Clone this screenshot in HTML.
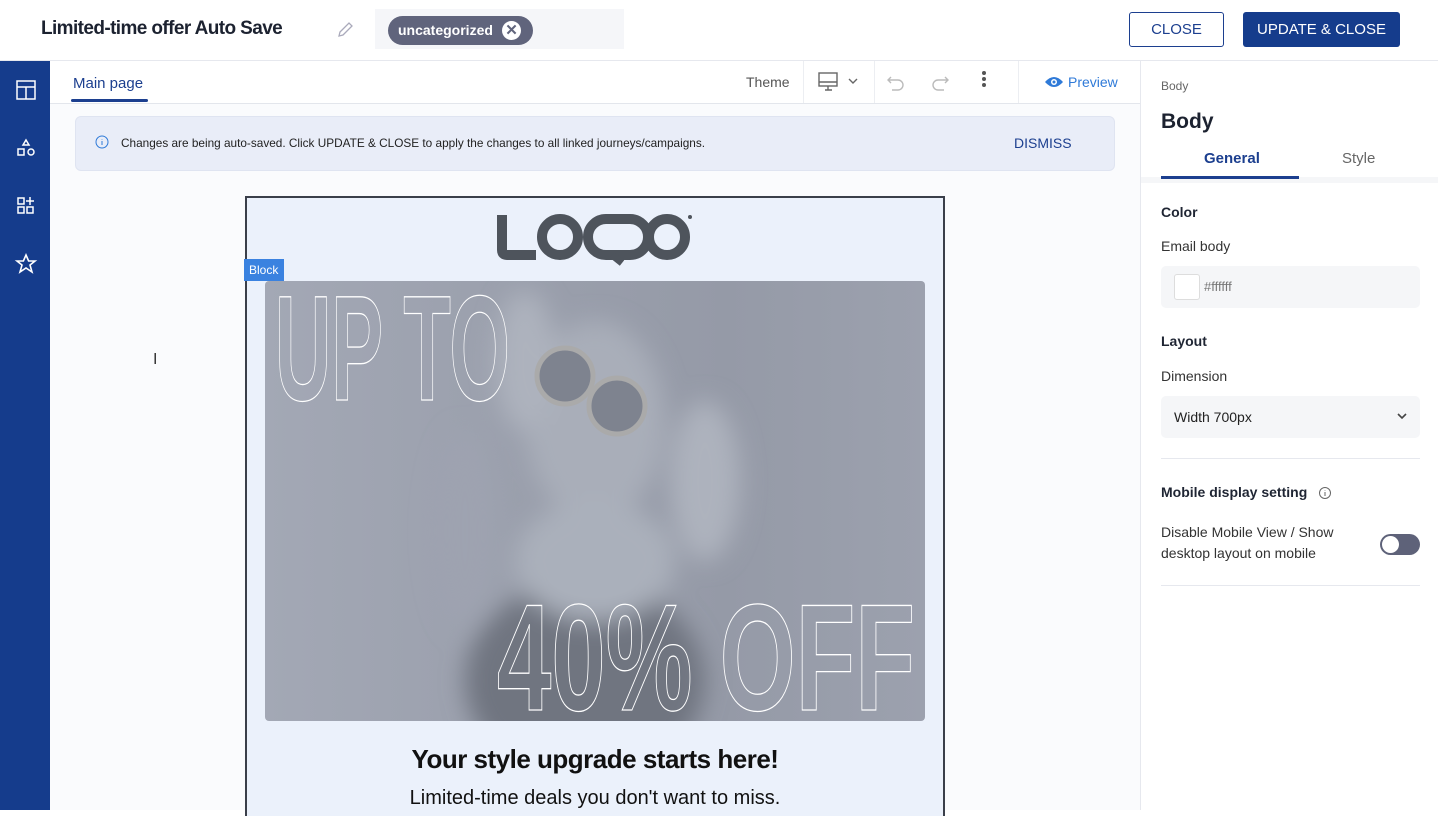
<!DOCTYPE html>
<html><head><meta charset="utf-8">
<style>
*{box-sizing:border-box;margin:0;padding:0}
body{width:1438px;height:810px;overflow:hidden;background:#fff;font-family:"Liberation Sans",sans-serif;position:relative;color:#1f2533}
.abs{position:absolute}
.btn{display:flex;align-items:center;justify-content:center}
</style></head><body>
<!-- header -->
<div class="abs" style="left:0;top:0;width:1438px;height:61px;border-bottom:1px solid #e6e8ee;background:#fff"></div>
<div class="abs" style="left:41px;top:18px;font-size:19px;font-weight:bold;letter-spacing:-0.6px;color:#1c2230">Limited-time offer Auto Save</div>
<svg class="abs" style="left:335px;top:20px" width="20" height="20" viewBox="0 0 20 20"><path d="M4 16 L5 12 L14 3 L17 6 L8 15 Z" fill="none" stroke="#aab" stroke-width="1.3"/></svg>
<div class="abs" style="left:375px;top:9px;width:249px;height:40px;background:#f5f6f9"></div>
<div class="abs" style="left:388px;top:16px;width:145px;height:29px;border-radius:15px;background:#60647c;color:#fff;font-size:14px;font-weight:bold;padding:6px 0 0 10px">uncategorized</div>
<div class="abs" style="left:502px;top:21px;width:19px;height:19px;border-radius:50%;background:#fff;color:#60647c;font-size:15px;font-weight:bold;text-align:center;line-height:19px">✕</div>
<div class="abs btn" style="left:1129px;top:12px;width:95px;height:35px;border:1.5px solid #1c3f8f;border-radius:3px;color:#1c3f8f;font-size:15px">CLOSE</div>
<div class="abs btn" style="left:1243px;top:12px;width:157px;height:35px;background:#153c8c;border-radius:3px;color:#fff;font-size:15px">UPDATE &amp; CLOSE</div>
<!-- sidebar -->
<div class="abs" style="left:0;top:61px;width:50px;height:749px;background:#153c8c"></div>
<svg class="abs" style="left:15px;top:79px" width="22" height="22" viewBox="0 0 22 22" fill="none" stroke="#fff" stroke-width="1.5"><rect x="2" y="2" width="18" height="18"/><path d="M2 8H20M11 8V20"/></svg>
<svg class="abs" style="left:15px;top:137px" width="22" height="22" viewBox="0 0 22 22" fill="none" stroke="#fff" stroke-width="1.5"><path d="M11 3L14 8H8Z"/><rect x="3" y="12" width="6" height="6"/><circle cx="16" cy="15" r="3"/></svg>
<svg class="abs" style="left:15px;top:195px" width="22" height="22" viewBox="0 0 22 22" fill="none" stroke="#fff" stroke-width="1.5"><rect x="3" y="3" width="6" height="6"/><rect x="3" y="12" width="6" height="6"/><rect x="12" y="12" width="6" height="6"/><path d="M15 2V10M11 6H19"/></svg>
<svg class="abs" style="left:14px;top:252px" width="24" height="24" viewBox="0 0 24 24" fill="none" stroke="#fff" stroke-width="1.6"><path d="M12 3L14.6 9H21L16 13L18 20L12 16L6 20L8 13L3 9H9.4Z"/></svg>
<!-- toolbar -->
<div class="abs" style="left:50px;top:61px;width:1090px;height:43px;border-bottom:1px solid #e3e6ec;background:#fff"></div>
<div class="abs" style="left:73px;top:75px;font-size:15px;color:#1c3f8f">Main page</div>
<div class="abs" style="left:71px;top:99px;width:77px;height:3px;background:#1c3f8f;border-radius:2px"></div>
<div class="abs" style="left:746px;top:74px;font-size:14px;color:#555">Theme</div>
<div class="abs" style="left:803px;top:61px;width:1px;height:42px;background:#eceef2"></div>
<svg class="abs" style="left:817px;top:71px" width="44" height="22" viewBox="0 0 44 22" fill="none" stroke="#666" stroke-width="1.4"><rect x="2" y="2" width="18" height="13"/><path d="M2 11H20M8 19H15M11 15V19"/><path d="M32 8L36 12L40 8"/></svg>
<div class="abs" style="left:874px;top:61px;width:1px;height:42px;background:#eceef2"></div>
<svg class="abs" style="left:886px;top:72px" width="64" height="20" viewBox="0 0 64 20" fill="none" stroke="#bbb" stroke-width="1.4"><path d="M5 5L2 8L5 11M2 8H12A5 5 0 0 1 12 18H6"/><path d="M59 5L62 8L59 11M62 8H52A5 5 0 0 0 52 18H58"/></svg>
<div class="abs" style="left:982px;top:71px;width:4px;height:4px;border-radius:50%;background:#555;box-shadow:0 6px 0 #555,0 12px 0 #555"></div>
<div class="abs" style="left:1018px;top:61px;width:1px;height:42px;background:#eceef2"></div>
<svg class="abs" style="left:1044px;top:74px" width="20" height="16" viewBox="0 0 20 16"><path d="M1 8Q10 -2 19 8Q10 18 1 8Z" fill="#2f7ad8"/><circle cx="10" cy="8" r="3" fill="#fff"/><circle cx="10" cy="8" r="1.5" fill="#2f7ad8"/></svg>
<div class="abs" style="left:1068px;top:74px;font-size:14px;color:#2f7ad8">Preview</div>
<!-- canvas -->
<div class="abs" style="left:50px;top:104px;width:1090px;height:706px;background:#fafbfd"></div>
<div class="abs" style="left:75px;top:116px;width:1040px;height:55px;background:#e9edf8;border-radius:6px;border:1px solid #dfe4f1"></div>
<svg class="abs" style="left:95px;top:135px" width="14" height="14" viewBox="0 0 14 14" fill="none" stroke="#2f7ad8" stroke-width="1"><circle cx="7" cy="7" r="6"/><path d="M7 6V10M7 4V4.5"/></svg>
<div class="abs" style="left:121px;top:136px;font-size:11.8px;color:#222">Changes are being auto-saved. Click UPDATE &amp; CLOSE to apply the changes to all linked journeys/campaigns.</div>
<div class="abs" style="left:1014px;top:135px;font-size:14px;color:#1c3f8f">DISMISS</div>
<div class="abs" style="left:153px;top:351px;font-size:16px;color:#333">I</div>
<!-- email -->
<div class="abs" style="left:245px;top:196px;width:700px;height:620px;border:2px solid #3a3f4a;border-bottom:none;background:#ebf1fb"></div>
<svg class="abs" style="left:490px;top:208px" width="210" height="60" viewBox="0 0 210 60" fill="none" stroke="#4e545c" stroke-width="10">
<path d="M12 7V42Q12 47 17 47H46"/>
<circle cx="70" cy="29" r="18"/>
<rect x="98" y="11" width="60" height="36" rx="18"/>
<path d="M122 47L132 55" stroke-width="7"/>
<circle cx="177" cy="29" r="18"/>
<circle cx="200" cy="9" r="2" fill="#4e545c" stroke="none"/>
</svg>
<div class="abs" style="left:244px;top:259px;width:40px;height:22px;background:#3a82e0;color:#fff;font-size:12px;padding:4px 0 0 5px">Block</div>
<div class="abs" style="left:265px;top:281px;width:660px;height:440px;border-radius:4px;overflow:hidden;background:linear-gradient(90deg,#a3a8b5,#9a9fac 40%,#959aa7 70%,#9ca1ae)">
<svg width="660" height="440" viewBox="0 0 660 440">
<defs><filter id="b"><feGaussianBlur stdDeviation="12"/></filter></defs>
<g filter="url(#b)">
<ellipse cx="330" cy="140" rx="70" ry="100" fill="#a9aeb9"/>
<ellipse cx="320" cy="400" rx="120" ry="100" fill="#6f7480"/>
<ellipse cx="330" cy="280" rx="80" ry="60" fill="#aab0bb"/>
<ellipse cx="260" cy="80" rx="30" ry="70" fill="#adb2bd"/>
<ellipse cx="440" cy="200" rx="35" ry="80" fill="#adb2bd"/>
<ellipse cx="200" cy="250" rx="30" ry="100" fill="#9ea3b0"/>
</g>
<circle cx="300" cy="95" r="28" fill="#7e838f" stroke="#aaa" stroke-width="5"/>
<circle cx="352" cy="125" r="28" fill="#7e838f" stroke="#aaa" stroke-width="5"/>
<g font-family="'Liberation Sans',sans-serif" font-weight="bold" fill="none" stroke="#fff" stroke-width="1.3">
<text x="10" y="119" font-size="150" textLength="235" lengthAdjust="spacingAndGlyphs">UP TO</text>
<text x="232" y="429" font-size="152" textLength="418" lengthAdjust="spacingAndGlyphs">40% OFF</text>
</g></svg></div>
<div class="abs" style="left:245px;top:744px;width:700px;text-align:center;font-size:26px;font-weight:bold;color:#111;letter-spacing:-0.5px">Your style upgrade starts here!</div>
<div class="abs" style="left:245px;top:787px;width:700px;text-align:center;font-size:20px;color:#111">Limited-time deals you don't want to miss.</div>
<!-- right panel -->
<div class="abs" style="left:1140px;top:61px;width:298px;height:749px;background:#fff;border-left:1px solid #e6e8ee"></div>
<div class="abs" style="left:1161px;top:79px;font-size:12px;color:#666">Body</div>
<div class="abs" style="left:1161px;top:110px;font-size:21px;font-weight:bold;color:#1c2230">Body</div>
<div class="abs" style="left:1204px;top:150px;font-size:15px;font-weight:bold;color:#1c3f8f">General</div>
<div class="abs" style="left:1342px;top:150px;font-size:15px;color:#666">Style</div>
<div class="abs" style="left:1141px;top:177px;width:297px;height:6px;background:#f5f6f8"></div>
<div class="abs" style="left:1161px;top:176px;width:138px;height:3px;background:#1c3f8f"></div>
<div class="abs" style="left:1161px;top:204px;font-size:14px;font-weight:bold">Color</div>
<div class="abs" style="left:1161px;top:238px;font-size:14px;color:#333">Email body</div>
<div class="abs" style="left:1161px;top:266px;width:259px;height:42px;background:#f5f6f8;border-radius:5px"></div>
<div class="abs" style="left:1174px;top:274px;width:26px;height:26px;background:#fff;border:1px solid #ddd;border-radius:3px"></div>
<div class="abs" style="left:1204px;top:279px;font-size:13px;color:#777">#ffffff</div>
<div class="abs" style="left:1161px;top:333px;font-size:14px;font-weight:bold">Layout</div>
<div class="abs" style="left:1161px;top:368px;font-size:14px;color:#333">Dimension</div>
<div class="abs" style="left:1161px;top:396px;width:259px;height:42px;background:#f5f6f8;border-radius:5px"></div>
<div class="abs" style="left:1174px;top:409px;font-size:14px;color:#222">Width 700px</div>
<svg class="abs" style="left:1395px;top:411px" width="14" height="10" viewBox="0 0 14 10" fill="none" stroke="#444" stroke-width="1.6"><path d="M3 3L7 7L11 3"/></svg>
<div class="abs" style="left:1161px;top:458px;width:259px;height:1px;background:#e6e8ee"></div>
<div class="abs" style="left:1161px;top:484px;font-size:14px;font-weight:bold">Mobile display setting</div>
<svg class="abs" style="left:1318px;top:486px" width="14" height="14" viewBox="0 0 14 14" fill="none" stroke="#666" stroke-width="1"><circle cx="7" cy="7" r="5.5"/><path d="M7 6V10M7 4V4.5"/></svg>
<div class="abs" style="left:1161px;top:522px;font-size:14px;color:#333;line-height:21px">Disable Mobile View / Show<br>desktop layout on mobile</div>
<div class="abs" style="left:1380px;top:534px;width:40px;height:21px;border-radius:11px;background:#5e6279"></div>
<div class="abs" style="left:1382px;top:536px;width:17px;height:17px;border-radius:50%;background:#fff"></div>
<div class="abs" style="left:1161px;top:585px;width:259px;height:1px;background:#e6e8ee"></div>
</body></html>
